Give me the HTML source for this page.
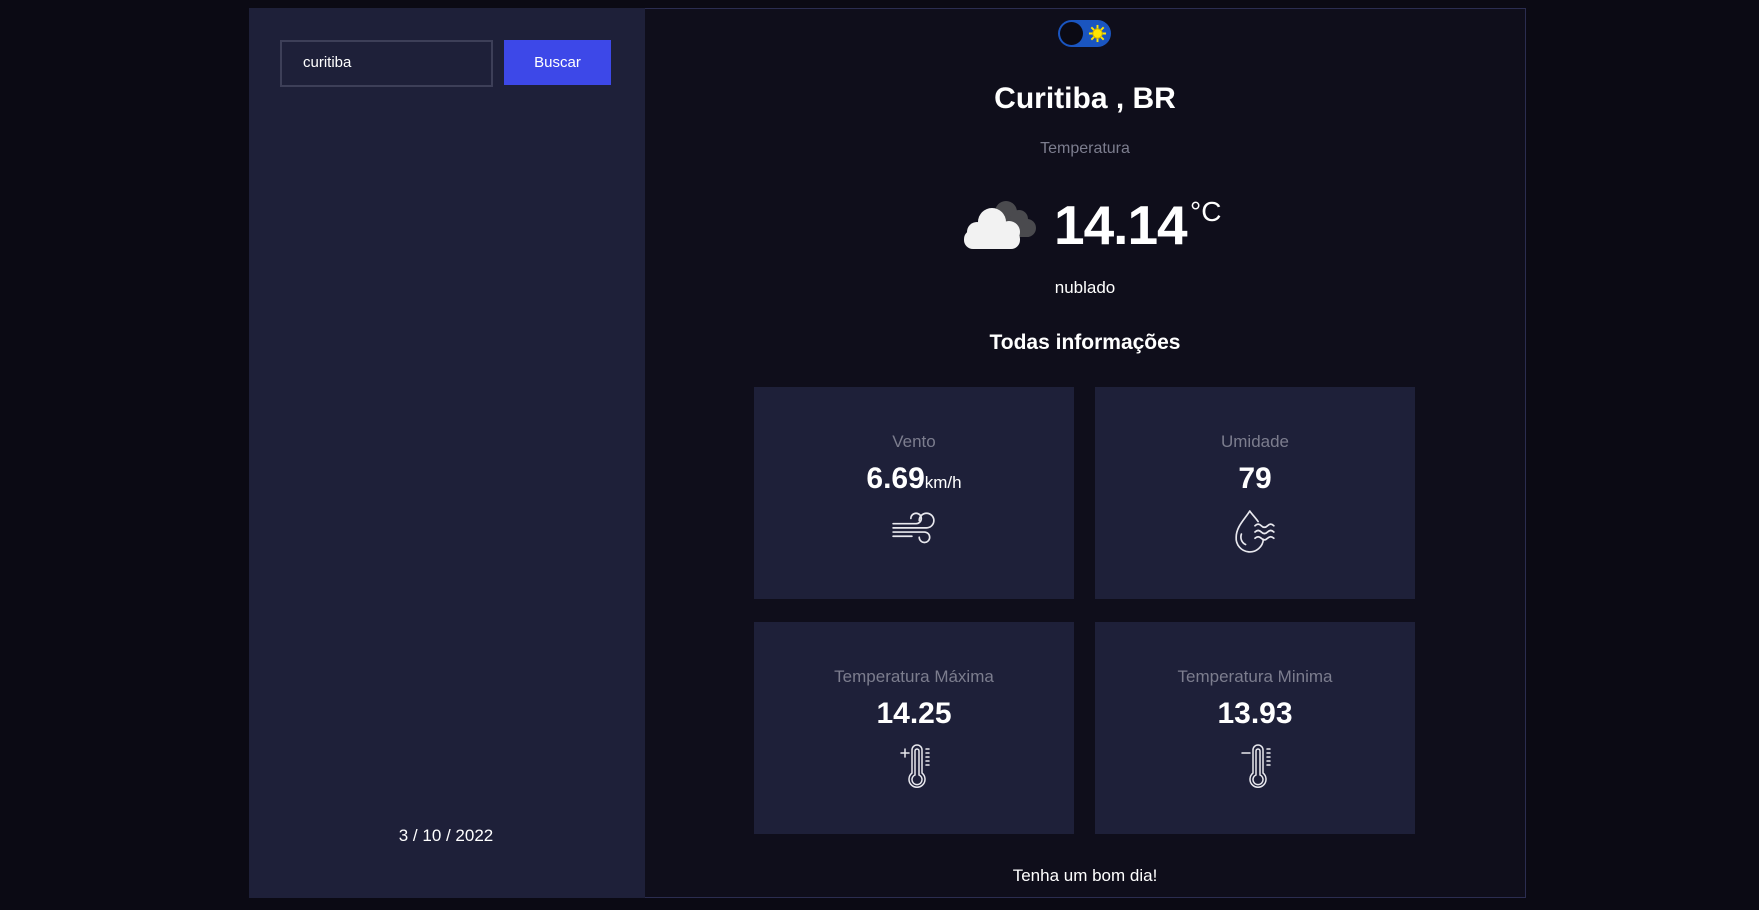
<!DOCTYPE html>
<html><head><meta charset="utf-8"><style>
*{margin:0;padding:0;box-sizing:border-box}
body{width:1759px;height:910px;background:#0b0a14;font-family:"Liberation Sans",sans-serif;position:relative;overflow:hidden;color:#fff}
.abs{position:absolute}
.side{left:249px;top:8px;width:396px;height:890px;background:#1e2039}
.main{left:645px;top:8px;width:881px;height:890px;background:#0f0e1b;border:1px solid #2b2d50;border-left:none}
.c{position:absolute;text-align:center;transform:translateX(-50%);white-space:nowrap}
.card{position:absolute;width:320px;height:212px;background:#1e2039}
.lbl{color:#7c7d8e;font-size:17px}
.val{font-weight:bold;font-size:30px}
</style></head><body>
<div class="abs side"></div>
<div class="abs main"></div>
<div class="abs" style="left:280px;top:40px;width:213px;height:47px;border:2px solid #3d3f58;background:#1e2039"></div>
<div class="abs" style="left:303px;top:54px;font-size:15px">curitiba</div>
<div class="abs" style="left:504px;top:40px;width:107px;height:45px;background:#3d48e8;font-size:15px;text-align:center;line-height:45px">Buscar</div>
<div class="c" style="left:446px;top:826px;font-size:17px">3 / 10 / 2022</div>

<div class="abs" style="left:1058px;top:20px;width:53px;height:27px;border-radius:14px;background:#1a55c0"></div>
<div class="abs" style="left:1060px;top:22px;width:23px;height:23px;border-radius:50%;background:#0b0a14"></div>
<svg class="abs" style="left:1088px;top:24px" width="19" height="19" viewBox="0 0 20 20"><g stroke="#ffe600" stroke-width="2"><line x1="10" y1="1" x2="10" y2="19"/><line x1="1" y1="10" x2="19" y2="10"/><line x1="3.5" y1="3.5" x2="16.5" y2="16.5"/><line x1="16.5" y1="3.5" x2="3.5" y2="16.5"/></g><circle cx="10" cy="10" r="5" fill="#ffe600" stroke="#c8a800"/></svg>

<div class="c" style="left:1085px;top:82px;font-size:30px;font-weight:bold">Curitiba , BR</div>
<div class="c" style="left:1085px;top:140px;font-size:16px;color:#7c7d8e">Temperatura</div>
<svg class="abs" style="left:962px;top:198px" width="76" height="54" viewBox="0 0 76 54">
<g fill="#4a4a4e"><circle cx="44" cy="14" r="11"/><circle cx="57" cy="21" r="9"/><circle cx="65" cy="30" r="9"/><rect x="36" y="22" width="36" height="17" rx="7"/></g>
<g fill="#f2f2f2"><circle cx="30" cy="24" r="14"/><circle cx="15" cy="34" r="10"/><circle cx="47" cy="34" r="11"/><rect x="2" y="32" width="56" height="19" rx="9"/></g></svg>
<div class="abs" style="left:1054px;top:193px;font-size:55px;font-weight:bold;letter-spacing:-1px">14.14</div>
<div class="abs" style="left:1190px;top:196px;font-size:28px">°C</div>
<div class="c" style="left:1085px;top:278px;font-size:17px">nublado</div>
<div class="c" style="left:1085px;top:331px;font-size:21px;font-weight:bold">Todas informações</div>

<div class="card" style="left:754px;top:387px"></div>
<div class="card" style="left:1095px;top:387px"></div>
<div class="card" style="left:754px;top:622px"></div>
<div class="card" style="left:1095px;top:622px"></div>

<div class="c lbl" style="left:914px;top:432px">Vento</div>
<div class="c" style="left:914px;top:462px"><span class="val">6.69</span><span style="font-size:17px">km/h</span></div>
<svg class="abs" style="left:891px;top:511px" width="46" height="40" viewBox="0 0 44 38" fill="none" stroke="#e8e8ee" stroke-width="1.6" stroke-linecap="round"><path d="M2 12h22a5 5 0 1 0-5-5"/><path d="M2 16h32a7 7 0 1 0-7-7"/><path d="M2 20h30a5 5 0 1 1-5 5"/><path d="M2 24h18"/></svg>

<div class="c lbl" style="left:1255px;top:432px">Umidade</div>
<div class="c val" style="left:1255px;top:462px">79</div>
<svg class="abs" style="left:1232px;top:509px" width="46" height="46" viewBox="0 0 44 44" fill="none" stroke="#e8e8ee" stroke-width="1.6" stroke-linecap="round"><path d="M17 2C12 10 4 17 4 27a13 13 0 0 0 26 2"/><path d="M17 2c3 4 6 7 8 10"/><path d="M9 24a8 8 0 0 0 4 10"/><path d="M22 16c2-2 4-2 6 0s4 2 6 0 4-2 6 0"/><path d="M22 22c2-2 4-2 6 0s4 2 6 0 4-2 6 0"/><path d="M22 28c2-2 4-2 6 0s4 2 6 0 4-2 6 0"/></svg>

<div class="c lbl" style="left:914px;top:667px">Temperatura Máxima</div>
<div class="c val" style="left:914px;top:697px">14.25</div>
<svg class="abs" style="left:898px;top:743px" width="36" height="48" viewBox="0 0 36 48" fill="none" stroke="#e8e8ee" stroke-width="1.5" stroke-linecap="round"><path d="M3 10h8M7 6v8"/><path d="M14 30V7a5 5 0 0 1 10 0v23a8 8 0 1 1-10 0z"/><path d="M17 32V8a2 2 0 0 1 4 0v24a5 5 0 1 1-4 0z"/><path d="M28 6h3M28 10h3M28 14h3M28 18h3M28 22h3"/></svg>

<div class="c lbl" style="left:1255px;top:667px">Temperatura Minima</div>
<div class="c val" style="left:1255px;top:697px">13.93</div>
<svg class="abs" style="left:1239px;top:743px" width="36" height="48" viewBox="0 0 36 48" fill="none" stroke="#e8e8ee" stroke-width="1.5" stroke-linecap="round"><path d="M3 10h8"/><path d="M14 30V7a5 5 0 0 1 10 0v23a8 8 0 1 1-10 0z"/><path d="M17 32V8a2 2 0 0 1 4 0v24a5 5 0 1 1-4 0z"/><path d="M28 6h3M28 10h3M28 14h3M28 18h3M28 22h3"/></svg>

<div class="c" style="left:1085px;top:866px;font-size:17px">Tenha um bom dia!</div>
</body></html>
